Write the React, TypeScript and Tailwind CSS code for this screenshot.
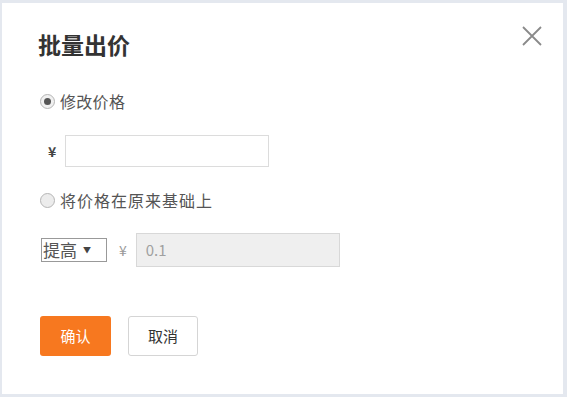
import React from "react";

export default function App() {
  const font = { fontFamily: '"Noto Sans CJK SC", "Noto Sans", sans-serif' };
  return (
    <div
      className="w-[567px] h-[397px] bg-[#e4e8ef] pt-[3px] pl-[2px] pr-[4px] pb-[3px]"
      style={font}
    >
      <div className="w-full h-full bg-white relative pl-[36px]">
        <div className="flex justify-between pt-[26px]">
          <h1 className="text-[23px] leading-[30px] font-bold text-[#333]">批量出价</h1>
          <button className="mr-[19px] mt-[-5px] w-[24px] h-[24px] flex items-center justify-center">
            <svg width="22" height="22" viewBox="0 0 22 22">
              <path d="M2 2 L20 20 M20 2 L2 20" stroke="#8a8a8a" strokeWidth="1.8" fill="none" />
            </svg>
          </button>
        </div>

        <label className="flex items-center mt-[32px] h-[20px]">
          <span className="w-[15px] h-[15px] rounded-full border border-[#b5b5b5] bg-[#f0f0f0] flex items-center justify-center ml-[2px]">
            <span className="w-[7px] h-[7px] rounded-full bg-[#555]" />
          </span>
          <span className="ml-[5px] text-[16px] tracking-[0.3px] text-[#555] leading-[20px]">修改价格</span>
        </label>

        <div className="flex items-center mt-[24px]">
          <span className="w-[27px] pl-[10px] text-[14px] text-[#444] font-bold">¥</span>
          <div className="w-[204px] h-[32px] border border-[#dcdcdc] bg-white" />
        </div>

        <label className="flex items-center mt-[23px] h-[20px]">
          <span className="w-[15px] h-[15px] rounded-full border border-[#b5b5b5] bg-[#ececec] ml-[2px]" />
          <span className="ml-[5px] text-[16px] tracking-[1px] text-[#555] leading-[20px]">将价格在原来基础上</span>
        </label>

        <div className="flex items-center mt-[23px]">
          <div className="ml-[3px] w-[66px] h-[24px] border border-[#999] flex items-center pl-[1px]">
            <span className="text-[17px] text-[#555] leading-[20px]">提高</span>
            <span className="ml-[6px] text-[8px] text-[#444]">▼</span>
          </div>
          <span className="ml-[12px] text-[14px] text-[#999]">¥</span>
          <div className="ml-[9px] w-[204px] h-[34px] border border-[#d8d8d8] bg-[#efefef] flex items-center pl-[9px]">
            <span className="text-[15px] text-[#a0a0a0]">0.1</span>
          </div>
        </div>

        <div className="flex items-center mt-[49px] ml-[2px] gap-[17px]">
          <button className="w-[71px] h-[40px] rounded-[3px] bg-[#f7781f] text-white text-[15px]">确认</button>
          <button className="w-[70px] h-[40px] rounded-[3px] border border-[#d5d5d5] bg-white text-[#333] text-[15px]">取消</button>
        </div>
      </div>
    </div>
  );
}
